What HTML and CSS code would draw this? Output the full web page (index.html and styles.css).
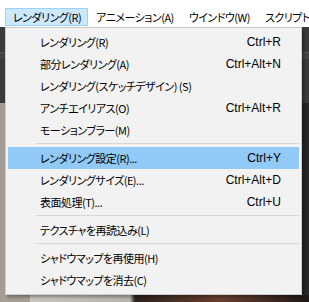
FILE: index.html
```html
<!DOCTYPE html>
<html lang="ja">
<head>
    <meta charset="UTF-8">
    <title>レンダリング メニュー</title>
    <link rel="stylesheet" href="styles.css">
</head>
<body>
    <nav class="menubar">
        <span class="menubar-item active">レンダリング(R)</span>
        <span class="menubar-item">アニメーション(A)</span>
        <span class="menubar-item">ウインドウ(W)</span>
        <span class="menubar-item">スクリプト(S)</span>
    </nav>

    <div class="workspace">
        <div class="panel-dark"></div>
        <div class="panel-canvas"></div>

        <!-- Dropdown for the レンダリング menu -->
        <ul class="dropdown">
            <li class="item"><span>レンダリング(R)</span><span class="key">Ctrl+R</span></li>
            <li class="item"><span>部分レンダリング(A)</span><span class="key">Ctrl+Alt+N</span></li>
            <li class="item"><span>レンダリング(スケッチデザイン) (S)</span><span class="key"></span></li>
            <li class="item"><span>アンチエイリアス(O)</span><span class="key">Ctrl+Alt+R</span></li>
            <li class="item"><span>モーションブラー(M)</span><span class="key"></span></li>
            <li class="separator"></li>
            <li class="item selected"><span>レンダリング設定(R)...</span><span class="key">Ctrl+Y</span></li>
            <li class="item"><span>レンダリングサイズ(E)...</span><span class="key">Ctrl+Alt+D</span></li>
            <li class="item"><span>表面処理(T)...</span><span class="key">Ctrl+U</span></li>
            <li class="separator"></li>
            <li class="item"><span>テクスチャを再読込み(L)</span><span class="key"></span></li>
            <li class="separator"></li>
            <li class="item"><span>シャドウマップを再使用(H)</span><span class="key"></span></li>
            <li class="item"><span>シャドウマップを消去(C)</span><span class="key"></span></li>
        </ul>
    </div>
</body>
</html>
```

FILE: styles.css
```css
* {
    box-sizing: border-box;
}

body {
    margin: 0;
    width: 309px;
    height: 302px;
    overflow: hidden;
    font-family: "Noto Sans CJK JP", "Noto Sans", sans-serif;
    font-size: 11px;
    letter-spacing: -0.5px;
    font-feature-settings: "palt";
    color: #000;
    background: #fff;
}

/* Menu bar */
.menubar {
    display: flex;
    height: 27px;
    padding: 8px 0 1px 5px;
    background: #fff;
    white-space: nowrap;
    overflow: hidden;
}

.menubar-item {
    display: flex;
    align-items: center;
    flex-shrink: 0;
    height: 18px;
    padding: 0 6px 0 7px;
    border: 1px solid transparent;
    line-height: 16px;
}

.menubar-item.active {
    background: #cce8ff;
    border-color: #99d1ff;
}

/* Application area under the menu */
.workspace {
    position: relative;
    height: 275px;
    background: linear-gradient(90deg, #a49e94 0, #a49e94 30px, #c9c6c0 30px, #b7b3ad 130px, #2b211d 135px, #6b3f2f 220px, #1e1815 309px);
}

.panel-dark {
    height: 76px;
    background: linear-gradient(180deg, #3b3b3b 0, #3b3b3b 25px, #5a5a5a 25px, #3f3f3f 27px, #4a4a4a 31px, #3b3b3b 32px);
}

.panel-canvas {
    height: 192px;
    background: linear-gradient(90deg, #a49e94 0, #a49e94 297px, #262626 297px);
}

/* Dropdown menu */
.dropdown {
    position: absolute;
    top: 0;
    left: 5px;
    width: 297px;
    margin: 0;
    padding: 3px 2px;
    list-style: none;
    background: #f2f2f2;
    border: 1px solid #cccccc;
    box-shadow: 2px 2px 3px rgba(0, 0, 0, 0.35);
}

.item {
    display: flex;
    justify-content: space-between;
    height: 22px;
    padding: 0 18px 0 32px;
    line-height: 22px;
    white-space: nowrap;
}

.item.selected {
    background: #91c9f7;
}

.key {
    font-family: "Liberation Sans", "Noto Sans", sans-serif;
    font-size: 12px;
    letter-spacing: 0;
}

.separator {
    height: 6px;
    margin-left: 28px;
    padding-top: 2px;
}

.separator::before {
    content: '';
    display: block;
    height: 1px;
    background: #d7d7d7;
}
```
